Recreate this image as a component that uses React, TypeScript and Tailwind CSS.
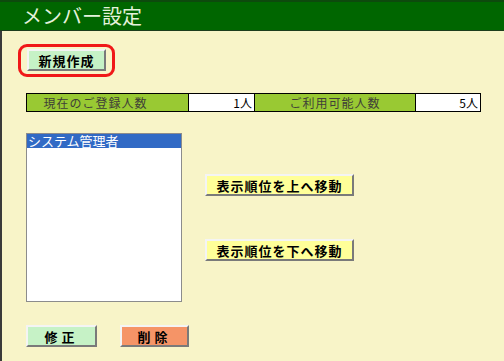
const font = { fontFamily: '"Noto Sans CJK JP", "Liberation Sans", sans-serif' };

// classic raised button edge: light top/left, dark bottom/right
const raised =
  "border-t-[2px] border-l-[2px] border-b-[2px] border-r-[2px] border-t-[#f4f4f4] border-l-[#f4f4f4] border-b-[#7a7a7a] border-r-[#7a7a7a]";

const Btn = ({ label, className }: { label: string; className: string }) => (
  <button
    className={`${raised} ${className} h-[22px] flex items-center justify-center text-[13px] font-bold text-black leading-none tracking-[1px]`}
  >
    {label}
  </button>
);

export default function App() {
  return (
    <div className="w-[504px] h-[361px] overflow-hidden bg-[#f8f4c8]" style={font}>
      {/* Title bar */}
      <div className="h-[31px] bg-[#006600] border-t-[2px] border-t-[#0d4a0d] border-b-[1px] border-b-[#1d3d1d] flex items-center pl-[22px]">
        <span className="text-[20px] leading-none text-[#e4f2dc]">メンバー設定</span>
      </div>

      <div className="h-[330px] border-l-[2px] border-l-[#3a3a3a] pl-[24px]">
        {/* new */}
        <div className="pt-[13px] -ml-[8px]">
          <div className="inline-flex border-[3px] border-[#f01818] rounded-[9px] pt-[2px] pb-[3px] px-[6px]">
            <Btn label="新規作成" className="w-[79px] bg-[#c6f2c6]" />
          </div>
        </div>

        {/* counts */}
        <div className="mt-[16px] flex w-[455px] h-[19px] border border-black text-[12px] leading-none">
          <div className="w-[161px] bg-[#99c933] flex items-center justify-center pr-[24px] text-[#404038] tracking-[1px]">
            現在のご登録人数
          </div>
          <div className="w-[66px] bg-white border-l border-black flex items-center justify-end pr-[2px] text-black">
            1人
          </div>
          <div className="w-[161px] bg-[#99c933] border-l border-black flex items-center justify-center text-[#404038] tracking-[1px]">
            ご利用可能人数
          </div>
          <div className="flex-1 bg-white border-l border-black flex items-center justify-end pr-[2px] text-black">
            5人
          </div>
        </div>

        {/* list + order buttons */}
        <div className="mt-[21px] flex">
          <div className="w-[156px] h-[169px] bg-white border border-[#8c8c8c]">
            <div className="h-[14px] bg-[#316ac5] text-white text-[13px] leading-[14px] pl-[1px]">
              システム管理者
            </div>
          </div>
          <div className="ml-[23px] pt-[41px] flex flex-col gap-[43px]">
            <Btn label="表示順位を上へ移動" className="w-[149px] bg-[#ffff99]" />
            <Btn label="表示順位を下へ移動" className="w-[149px] bg-[#ffff99]" />
          </div>
        </div>

        {/* edit / delete */}
        <div className="mt-[23px] flex gap-[23px]">
          <Btn label="修正" className="w-[71px] bg-[#c6f2c6] tracking-[4px]" />
          <Btn label="削除" className="w-[69px] bg-[#f59467] text-[#3a1a10] tracking-[4px]" />
        </div>
      </div>
    </div>
  );
}
